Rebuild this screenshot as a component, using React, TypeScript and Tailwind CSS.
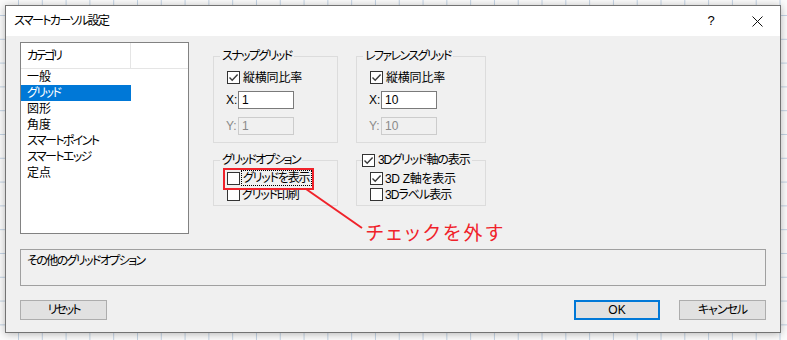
import React from 'react';

const categories = [
  { label: '一般', kanji: true },
  { label: 'グリッド', kanji: false },
  { label: '図形', kanji: true },
  { label: '角度', kanji: true },
  { label: 'スマートポイント', kanji: false },
  { label: 'スマートエッジ', kanji: false },
  { label: '定点', kanji: true },
];

function Check({ checked }: { checked?: boolean }) {
  return (
    <span className="w-[13px] h-[13px] border border-[#333333] bg-white flex items-center justify-center shrink-0">
      {checked && (
        <svg width="11" height="11" viewBox="0 0 11 11">
          <path d="M1.5 5.5 L4.2 8.2 L9.6 2.6" fill="none" stroke="#3a3a3a" strokeWidth="1.4" />
        </svg>
      )}
    </span>
  );
}

function Edit({ value, disabled }: { value: string; disabled?: boolean }) {
  return (
    <div
      className={
        disabled
          ? 'w-[56px] h-[18px] border border-[#cccccc] bg-[#f0f0f0] text-[#8a8a8a] pl-[3px] flex items-center tracking-normal'
          : 'w-[56px] h-[18px] border border-[#7a7a7a] bg-white pl-[3px] flex items-center tracking-normal'
      }
    >
      {value}
    </div>
  );
}

function RefGroup({ title, x, y }: { title: string; x: string; y: string }) {
  return (
    <fieldset className="border border-[#dcdcdc] h-[94px] min-w-0">
      <legend className="ml-[6px] px-[2px] h-[14px] leading-[14px]">{title}</legend>
      <div className="pl-[12px] flex flex-col">
        <div className="mt-[7px] h-[15px] flex items-center ml-[1px] gap-[3px]">
          <Check checked />
          <span className="tracking-[-0.2px]">縦横同比率</span>
        </div>
        <div className="mt-[5px] h-[19px] flex items-center">
          <span className="w-[12px] tracking-normal">X:</span>
          <Edit value={x} />
        </div>
        <div className="mt-[7px] h-[19px] flex items-center">
          <span className="w-[12px] tracking-normal text-[#8a8a8a]">Y:</span>
          <Edit value={y} disabled />
        </div>
      </div>
    </fieldset>
  );
}

export default function App() {
  return (
    <div className="relative w-[787px] h-[340px] overflow-hidden bg-[#fbfbfb] [background-image:linear-gradient(to_right,#c3d3e4_1px,transparent_1px),linear-gradient(to_bottom,#c3d3e4_1px,transparent_1px)] [background-size:23.8px_23.8px] [background-position:18px_15px] pl-[5px] pt-[5px] text-[12px] tracking-[-1.6px] text-black font-['Liberation_Sans','Noto_Sans_CJK_JP',sans-serif] [font-feature-settings:'palt']">
      <div className="w-[776px] h-[328px] border border-[#737373] bg-[#f0f0f0] flex flex-col shadow-[0_1px_8px_rgba(0,0,0,0.28)]">
        {/* Title bar */}
        <div className="h-[30px] bg-white flex items-center shrink-0">
          <span className="pl-[8px] text-[12px]">スマートカーソル設定</span>
          <div className="ml-auto flex h-full">
            <div className="w-[46px] flex items-center justify-center text-[13px] tracking-normal">?</div>
            <div className="w-[46px] flex items-center justify-center">
              <svg width="11" height="11" viewBox="0 0 11 11">
                <path d="M0.5 0.5 L10.5 10.5 M10.5 0.5 L0.5 10.5" stroke="#111" strokeWidth="1" />
              </svg>
            </div>
          </div>
        </div>

        {/* Body */}
        <div className="flex-1 px-[14px] pt-[6px] flex flex-col">
          <div className="flex">
            {/* Category list */}
            <div className="w-[169px] h-[192px] border border-[#828282] bg-white flex flex-col shrink-0">
              <div className="h-[26px] flex border-b border-[#e5e5e5]">
                <div className="w-[110px] border-r border-[#e5e5e5] pl-[6px] flex items-center tracking-[-2.4px]">カテゴリ</div>
              </div>
              {categories.map((c, i) => (
                <div
                  key={c.label}
                  className={
                    i === 1
                      ? 'w-[110px] h-[16px] leading-[16px] pl-[6px] bg-[#0078d7] text-white'
                      : c.kanji
                        ? 'w-[110px] h-[16px] leading-[16px] pl-[6px] tracking-normal'
                        : 'w-[110px] h-[16px] leading-[16px] pl-[6px]'
                  }
                >
                  {c.label}
                </div>
              ))}
            </div>

            {/* Option groups */}
            <div className="ml-[24px] mt-[7px] grid grid-cols-[125px_130px] gap-x-[18px] gap-y-[10px] content-start">
              <RefGroup title="スナップグリッド" x="1" y="1" />
              <RefGroup title="レファレンスグリッド" x="10" y="10" />

              <fieldset className="border border-[#dcdcdc] h-[53px] min-w-0">
                <legend className="ml-[6px] px-[2px] h-[14px] leading-[14px]">グリッドオプション</legend>
                <div className="pl-[13px] flex flex-col">
                  <div className="mt-[3px] h-[16px] flex items-center gap-[1px]">
                    <Check />
                    <span className="border border-dotted border-black h-[16px] leading-[14px] pl-[1px] pr-[2px] tracking-[-1.2px]">グリッドを表示</span>
                  </div>
                  <div className="mt-[1px] h-[15px] flex items-center gap-[2px]">
                    <Check />
                    <span className="tracking-[-1.2px]">グリッド印刷</span>
                  </div>
                </div>
              </fieldset>

              <fieldset className="border border-[#dcdcdc] h-[53px] min-w-0">
                <legend className="ml-[5px] pr-[2px] h-[14px] flex items-center gap-[3px]">
                  <Check checked />
                  <span className="leading-[14px] tracking-[-1.1px]">3Dグリッド軸の表示</span>
                </legend>
                <div className="pl-[13px] flex flex-col">
                  <div className="mt-[4px] h-[15px] flex items-center gap-[2px]">
                    <Check checked />
                    <span className="tracking-[-0.3px]">3D Z軸を表示</span>
                  </div>
                  <div className="mt-[1px] h-[15px] flex items-center gap-[2px]">
                    <Check />
                    <span className="tracking-[-1px]">3Dラベル表示</span>
                  </div>
                </div>
              </fieldset>
            </div>
          </div>

          {/* Description */}
          <div className="mt-[15px] h-[37px] border border-[#a0a0a0] pl-[6px] pt-[4px] leading-[14px]">
            その他のグリッドオプション
          </div>

          {/* Buttons */}
          <div className="mt-[14px] flex h-[20px]">
            <div className="w-[87px] border border-[#adadad] bg-[#e1e1e1] flex items-center justify-center tracking-[-2px]">リセット</div>
            <div className="ml-auto w-[86px] border-2 border-[#0078d7] bg-[#e1e1e1] flex items-center justify-center tracking-normal">OK</div>
            <div className="ml-[19px] w-[87px] border border-[#adadad] bg-[#e1e1e1] flex items-center justify-center tracking-[-1px]">キャンセル</div>
          </div>
        </div>
      </div>

      {/* Red annotation */}
      <div className="absolute left-[223px] top-[168px] w-[91px] h-[22px] border-2 border-[#f0222a]" />
      <svg className="absolute left-0 top-0" width="787" height="340">
        <line x1="306" y1="189" x2="362" y2="228" stroke="#f0222a" strokeWidth="2" />
      </svg>
      <div className="absolute left-[366px] top-[224px] text-[19px] leading-[20px] text-[#f0222a] tracking-[3px]">チェックを外す</div>
    </div>
  );
}
